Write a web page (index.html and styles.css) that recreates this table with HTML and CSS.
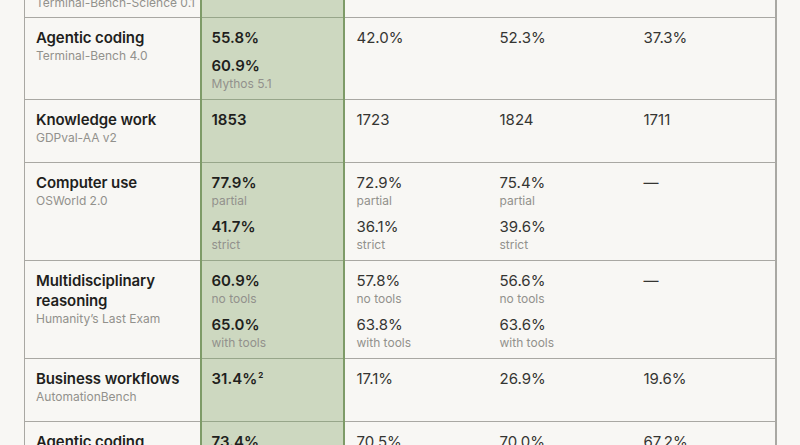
FILE: index.html
```html
<!DOCTYPE html>
<html>
<head>
<meta charset="utf-8">
<link rel="stylesheet" href="styles.css">
</head>
<body>
<div class="wrap">
<table class="bench">
  <colgroup>
    <col class="c-label"><col class="c-hl"><col class="c-v"><col class="c-v"><col class="c-v">
  </colgroup>
  <tbody>
    <tr class="first">
      <td class="label"><div class="name">Scientific coding</div><div class="sub">Terminal-Bench-Science 0.1</div></td>
      <td class="hl"></td>
      <td></td><td></td><td></td>
    </tr>
    <tr>
      <td class="label"><div class="name">Agentic coding</div><div class="sub">Terminal-Bench 4.0</div></td>
      <td class="hl">
        <div class="entry"><div class="val">55.8%</div></div>
        <div class="entry"><div class="val">60.9%</div><div class="sub">Mythos 5.1</div></div>
      </td>
      <td><div class="val">42.0%</div></td>
      <td><div class="val">52.3%</div></td>
      <td><div class="val">37.3%</div></td>
    </tr>
    <tr>
      <td class="label"><div class="name">Knowledge work</div><div class="sub">GDPval-AA v2</div></td>
      <td class="hl"><div class="val">1853</div></td>
      <td><div class="val">1723</div></td>
      <td><div class="val">1824</div></td>
      <td><div class="val">1711</div></td>
    </tr>
    <tr>
      <td class="label"><div class="name">Computer use</div><div class="sub">OSWorld 2.0</div></td>
      <td class="hl">
        <div class="entry"><div class="val">77.9%</div><div class="sub">partial</div></div>
        <div class="entry"><div class="val">41.7%</div><div class="sub">strict</div></div>
      </td>
      <td>
        <div class="entry"><div class="val">72.9%</div><div class="sub">partial</div></div>
        <div class="entry"><div class="val">36.1%</div><div class="sub">strict</div></div>
      </td>
      <td>
        <div class="entry"><div class="val">75.4%</div><div class="sub">partial</div></div>
        <div class="entry"><div class="val">39.6%</div><div class="sub">strict</div></div>
      </td>
      <td><div class="val">—</div></td>
    </tr>
    <tr>
      <td class="label"><div class="name">Multidisciplinary reasoning</div><div class="sub">Humanity’s Last Exam</div></td>
      <td class="hl">
        <div class="entry"><div class="val">60.9%</div><div class="sub">no tools</div></div>
        <div class="entry"><div class="val">65.0%</div><div class="sub">with tools</div></div>
      </td>
      <td>
        <div class="entry"><div class="val">57.8%</div><div class="sub">no tools</div></div>
        <div class="entry"><div class="val">63.8%</div><div class="sub">with tools</div></div>
      </td>
      <td>
        <div class="entry"><div class="val">56.6%</div><div class="sub">no tools</div></div>
        <div class="entry"><div class="val">63.6%</div><div class="sub">with tools</div></div>
      </td>
      <td><div class="val">—</div></td>
    </tr>
    <tr>
      <td class="label"><div class="name">Business workflows</div><div class="sub">AutomationBench</div></td>
      <td class="hl"><div class="val">31.4%<sup>2</sup></div></td>
      <td><div class="val">17.1%</div></td>
      <td><div class="val">26.9%</div></td>
      <td><div class="val">19.6%</div></td>
    </tr>
    <tr>
      <td class="label"><div class="name">Agentic coding</div><div class="sub">SWE-bench Pro</div></td>
      <td class="hl"><div class="val">73.4%</div></td>
      <td><div class="val">70.5%</div></td>
      <td><div class="val">70.0%</div></td>
      <td><div class="val">67.2%</div></td>
    </tr>
  </tbody>
</table>
</div>
</body>
</html>
```

FILE: styles.css
```css
html, body {
  margin: 0;
  padding: 0;
  background: #f8f7f4;
  overflow: hidden;
}
body {
  font-family: Inter, "Liberation Sans", sans-serif;
  color: #232321;
}
.wrap {
  padding-left: 24px;
  margin-top: -35px;
}
.bench {
  width: 752px;
  table-layout: fixed;
  border-collapse: collapse;
  border-left: 1px solid #a9a8a3;
  border-right: 2px solid #a9a8a3;
}
.c-label { width: 176px; }
.c-hl { width: 143px; }
.c-v { width: 144px; }
.bench td {
  vertical-align: top;
  border-top: 1px solid #a9a8a3;
  border-bottom: 1px solid #a9a8a3;
  padding: 10px 12px 7px;
}
.bench td.label {
  padding-left: 11px;
  padding-bottom: 16px;
}
.bench tr.first td {
  border-top: none;
  padding-bottom: 6px;
}
.bench td.hl {
  background: #cdd8c0;
  border-left: 2px solid #7e9b68;
  border-right: 2px solid #7e9b68;
  border-top-color: #97a68a;
  border-bottom-color: #97a68a;
  padding-left: 10px;
}
.name {
  font-size: 15px;
  line-height: 20px;
  font-weight: 600;
  color: #1f1f1d;
  letter-spacing: -0.1px;
}
.sub {
  font-size: 12px;
  line-height: 16px;
  color: #92918c;
  white-space: nowrap;
}
.val {
  font-size: 15px;
  line-height: 20px;
  color: #353532;
}
.hl .val {
  font-weight: 600;
  color: #1f1f1d;
}
.entry + .entry {
  margin-top: 8px;
}
sup {
  font-size: 8px;
  font-weight: 700;
  line-height: 0;
  vertical-align: 6px;
  margin-left: 1px;
}
```
